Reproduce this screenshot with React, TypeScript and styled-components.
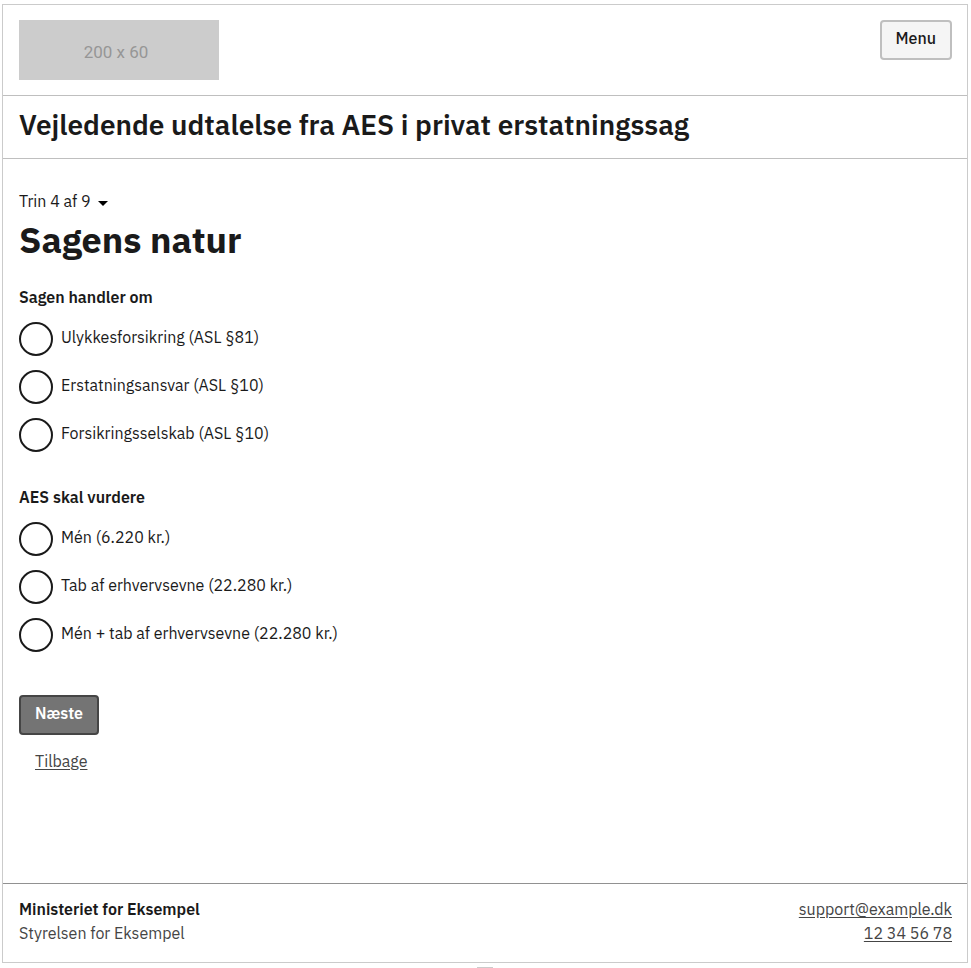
import React, { useState } from "react";
import styled, { createGlobalStyle } from "styled-components";

const GlobalStyle = createGlobalStyle`
  *, *::before, *::after { box-sizing: border-box; }
  body {
    margin: 0;
    background: #fff;
    color: #1a1a1a;
    font-family: "IBM Plex Sans", "Noto Sans", "Open Sans", sans-serif;
    font-size: 16px;
    font-weight: 400;
    line-height: 24px;
  }
`;

const Screen = styled.div`
  display: flex;
  flex-direction: column;
  min-height: 100vh;
  padding: 4px 3px 0 2px;
`;

const Frame = styled.div`
  flex: 1;
  display: flex;
  flex-direction: column;
  border: 1px solid #cbcbcb;
`;

const Handle = styled.div`
  align-self: center;
  width: 16px;
  height: 1px;
  margin-top: 4px;
  background: #cbcbcb;
`;

const Header = styled.header`
  display: flex;
  justify-content: space-between;
  align-items: flex-start;
  padding: 15px;
  padding-left: 16px;
  border-bottom: 1px solid #bfbfbf;
`;

const Logo = styled.svg`
  display: block;
  width: 200px;
  height: 60px;
`;

const Button = styled.button<{ $primary?: boolean }>`
  height: 40px;
  padding: 0 14px 4px;
  border: 2px solid ${(p) => (p.$primary ? "#454545" : "#bfbfbf")};
  border-radius: 4px;
  background: ${(p) => (p.$primary ? "#747474" : "#f5f5f5")};
  color: ${(p) => (p.$primary ? "#fff" : "#1a1a1a")};
  font: inherit;
  font-weight: ${(p) => (p.$primary ? 600 : 500)};
  cursor: pointer;
`;

const TitleBar = styled.div`
  padding: 11px 16px 15px;
  border-bottom: 1px solid #bfbfbf;
`;

const SolutionTitle = styled.p`
  margin: 0;
  font-size: 28px;
  font-weight: 600;
  line-height: 36px;
`;

const Main = styled.main`
  flex: 1;
  padding: 30px 16px 48px;
`;

const StepButton = styled.button`
  display: flex;
  align-items: center;
  gap: 7px;
  padding: 0;
  border: 0;
  background: none;
  color: inherit;
  font: inherit;
  cursor: pointer;
`;

const Caret = styled.svg`
  width: 10px;
  height: 5px;
  margin-top: 4px;
`;

const Heading = styled.h1`
  margin: 3px 0 21px;
  font-size: 36px;
  font-weight: 700;
  line-height: 48px;
`;

const Group = styled.fieldset`
  min-width: 0;
  margin: 0 0 33px;
  padding: 0;
  border: 0;
`;

const Legend = styled.legend`
  margin-bottom: 13px;
  padding: 0;
  font-weight: 600;
`;

const Options = styled.div`
  display: grid;
  gap: 14px;
`;

const Option = styled.label`
  display: flex;
  align-items: center;
  gap: 8px;
  width: fit-content;
  cursor: pointer;
`;

const OptionText = styled.span`
  padding-bottom: 4px;
`;

const Radio = styled.input`
  appearance: none;
  flex: none;
  width: 34px;
  height: 34px;
  margin: 0;
  border: 2px solid #1a1a1a;
  border-radius: 50%;
  background: #fff;
  cursor: pointer;

  &:checked {
    background: #1a1a1a;
    box-shadow: inset 0 0 0 6px #fff;
  }
`;

const Actions = styled.div`
  display: flex;
  flex-direction: column;
  align-items: flex-start;
  gap: 14px;
  padding-top: 10px;
`;

const Link = styled.a`
  color: #454545;
  text-decoration: underline;
  text-underline-offset: 2px;
`;

const BackLink = styled(Link)`
  margin-left: 16px;
`;

const Footer = styled.footer`
  display: flex;
  justify-content: space-between;
  padding: 13px 15px 17px 16px;
  border-top: 1px solid #919191;
`;

const FooterColumn = styled.div<{ $end?: boolean }>`
  display: flex;
  flex-direction: column;
  align-items: ${(p) => (p.$end ? "flex-end" : "flex-start")};
  color: #454545;
`;

const Ministry = styled.strong`
  color: #1a1a1a;
  font-weight: 600;
`;

const groups = [
  {
    name: "sagstype",
    legend: "Sagen handler om",
    options: [
      "Ulykkesforsikring (ASL §81)",
      "Erstatningsansvar (ASL §10)",
      "Forsikringsselskab (ASL §10)",
    ],
  },
  {
    name: "vurdering",
    legend: "AES skal vurdere",
    options: [
      "Mén (6.220 kr.)",
      "Tab af erhvervsevne (22.280 kr.)",
      "Mén + tab af erhvervsevne (22.280 kr.)",
    ],
  },
];

export default function App() {
  const [answers, setAnswers] = useState<Record<string, string>>({});

  return (
    <>
      <GlobalStyle />
      <Screen>
        <Frame>
          <Header>
            <Logo viewBox="0 0 200 60" role="img" aria-label="Logo">
              <rect width="200" height="60" fill="#cccccc" />
              <text
                x="97"
                y="38"
                textAnchor="middle"
                fill="#969696"
                fontFamily="Roboto, sans-serif"
                fontSize="17"
              >
                200 x 60
              </text>
            </Logo>
            <Button type="button">Menu</Button>
          </Header>
          <TitleBar>
            <SolutionTitle>
              Vejledende udtalelse fra AES i privat erstatningssag
            </SolutionTitle>
          </TitleBar>
          <Main>
            <StepButton type="button">
              Trin 4 af 9
              <Caret viewBox="0 0 10 5" aria-hidden="true">
                <path d="M0 0h10L5 5z" fill="#000" />
              </Caret>
            </StepButton>
            <Heading>Sagens natur</Heading>
            <form onSubmit={(e) => e.preventDefault()}>
              {groups.map((group) => (
                <Group key={group.name}>
                  <Legend>{group.legend}</Legend>
                  <Options>
                    {group.options.map((option) => (
                      <Option key={option}>
                        <Radio
                          type="radio"
                          name={group.name}
                          value={option}
                          checked={answers[group.name] === option}
                          onChange={() =>
                            setAnswers({ ...answers, [group.name]: option })
                          }
                        />
                        <OptionText>{option}</OptionText>
                      </Option>
                    ))}
                  </Options>
                </Group>
              ))}
              <Actions>
                <Button type="submit" $primary>
                  Næste
                </Button>
                <BackLink href="#tilbage">Tilbage</BackLink>
              </Actions>
            </form>
          </Main>
          <Footer>
            <FooterColumn>
              <Ministry>Ministeriet for Eksempel</Ministry>
              <span>Styrelsen for Eksempel</span>
            </FooterColumn>
            <FooterColumn $end>
              <Link href="mailto:support@example.dk">support@example.dk</Link>
              <Link href="tel:12345678">12 34 56 78</Link>
            </FooterColumn>
          </Footer>
        </Frame>
        <Handle />
      </Screen>
    </>
  );
}
